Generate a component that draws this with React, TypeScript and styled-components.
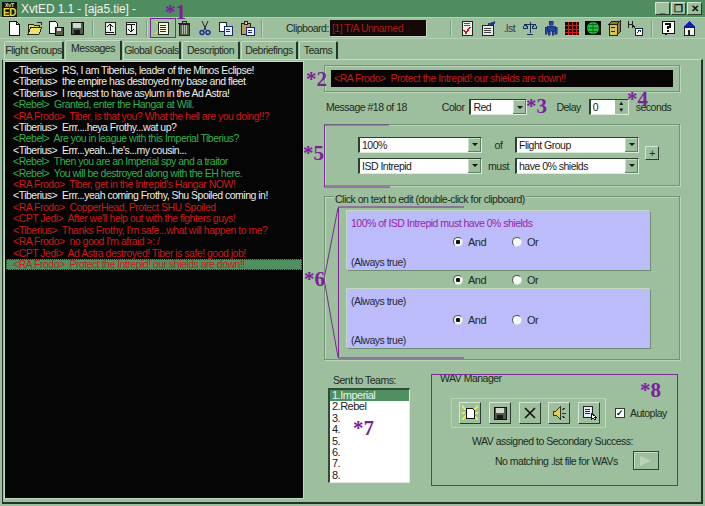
import React from "react";
import styled, { createGlobalStyle } from "styled-components";

const GlobalStyle = createGlobalStyle`
  html, body { margin: 0; padding: 0; background: #9dbf9d; }
  * { box-sizing: border-box; }
  body {
    font-family: "Liberation Sans", Arial, sans-serif;
    font-size: 10.5px;
    letter-spacing: -0.5px;
    color: #1c2a1e;
  }
`;

const MESSAGES: [string, string][] = [
  ["w", "<Tiberius>  RS, I am Tiberius, leader of the Minos Eclipse!"],
  ["w", "<Tiberius>  the empire has destroyed my base and fleet"],
  ["w", "<Tiberius>  I request to have asylum in the Ad Astra!"],
  ["g", "<Rebel>  Granted, enter the Hangar at Will."],
  ["r", "<RA Frodo>  Tiber, is that you? What the hell are you doing!!?"],
  ["w", "<Tiberius>  Errr....heya Frothy...wat up?"],
  ["g", "<Rebel>  Are you in league with this Imperial Tiberius?"],
  ["w", "<Tiberius>  Errr...yeah...he's...my cousin..."],
  ["g", "<Rebel>  Then you are an Imperial spy and a traitor"],
  ["g", "<Rebel>  You will be destroyed along with the EH here."],
  ["r", "<RA Frodo>  Tiber, get in the Intrepid's Hangar NOW!"],
  ["w", "<Tiberius>  Errr...yeah coming Frothy, Shu Spoiled coming in!"],
  ["r", "<RA Frodo>  CopperHead, Protect SHU Spoiled"],
  ["r", "<CPT Jedi>  After we'll help out with the fighters guys!"],
  ["r", "<Tiberius>  Thanks Frothy, I'm safe...what will happen to me?"],
  ["r", "<RA Frodo>  no good I'm afraid >: /"],
  ["r", "<CPT Jedi>  Ad Astra destroyed! Tiber is safe! good job!"],
  ["s", "<RA Frodo>  Protect the Intrepid! our shields are down!!"],
];

const TABS = [
  { label: "Flight Groups", w: 60 },
  { label: "Messages", w: 57, active: true },
  { label: "Global Goals", w: 58 },
  { label: "Description", w: 58 },
  { label: "Debriefings", w: 57 },
  { label: "Teams", w: 39 },
];

const COLORS: Record<string, string> = { w: "#eeeee6", g: "#35b04e", r: "#cc1a1a", s: "#c81e1e" };

const Ico = ({ children }: { children: React.ReactNode }) => (
  <svg width="16" height="16" viewBox="0 0 16 16" shapeRendering="crispEdges">{children}</svg>
);

const NewDoc = () => (
  <Ico><path d="M3 1h7l3 3v11H3z" fill="#fff" stroke="#111" /><path d="M10 1v3h3" fill="none" stroke="#111" /></Ico>
);
const BurstDoc = () => (
  <Ico>
    <path d="M0 1l4 4M16 1l-4 4M0 15l4-4M16 15l-4-4M0 8h3M13 8h3" stroke="#e8e85a" strokeWidth="2" />
    <path d="M4 3h6l2 2v8H4z" fill="#fff" stroke="#111" />
  </Ico>
);
const OpenDoc = () => (
  <Ico><path d="M1 4h5l1 1h5v2H4l-3 7z" fill="#e4d24a" stroke="#222" /><path d="M4 7h11l-3 7H1z" fill="#f1e36a" stroke="#222" /><path d="M10 2h4v3" fill="none" stroke="#222" /></Ico>
);
const SaveAs = () => (
  <Ico><path d="M1 1h6l2 2v10H1z" fill="#fff" stroke="#111" /><path d="M7 7h8v8H7z" fill="#5a5a48" stroke="#111" /><path d="M9 8h4v3H9z" fill="#ddd" /></Ico>
);
const Floppy = () => (
  <Ico><path d="M2 2h12v12H2z" fill="#4e5a4a" stroke="#111" /><path d="M4 3h8v5H4z" fill="#cfd8cc" /><path d="M5 10h6v4H5z" fill="#181818" /></Ico>
);
const MoveUp = () => (
  <Ico><path d="M3 2h10v12H3z" fill="#e8efe6" stroke="#222" /><path d="M8 4v7M5 7l3-3 3 3M4 12h8" fill="none" stroke="#111" /></Ico>
);
const MoveDown = () => (
  <Ico><path d="M3 2h10v12H3z" fill="#e8efe6" stroke="#222" /><path d="M8 5v7M5 9l3 3 3-3M4 4h8" fill="none" stroke="#111" /></Ico>
);
const Note = () => (
  <Ico>
    <path d="M0 1l3 3M15 1l-3 3M0 14l3-3M15 14l-3-3" stroke="#e8e85a" />
    <path d="M3 2h10v12H3z" fill="#f4f7d8" stroke="#222" /><path d="M5 5h6M5 7h6M5 9h6M5 11h6" stroke="#333" />
  </Ico>
);
const Trash = () => (
  <Ico><path d="M2 3h12M6 3V1h4v2" fill="none" stroke="#222" /><path d="M3 4h10v11H3z" fill="#57604f" stroke="#222" /><path d="M6 5v9M8 5v9M10 5v9" stroke="#b5bbae" /></Ico>
);
const Scissors = () => (
  <svg width="16" height="16" viewBox="0 0 16 16"><path d="M5 1l4 9M11 1L7 10" stroke="#222" fill="none" /><circle cx="5" cy="12.5" r="2" fill="none" stroke="#1a2a9a" strokeWidth="1.4" /><circle cx="11" cy="12.5" r="2" fill="none" stroke="#1a2a9a" strokeWidth="1.4" /></svg>
);
const Copy = () => (
  <Ico><path d="M1 2h7v9H1z" fill="#fff" stroke="#222" /><path d="M6 6h8v9H6z" fill="#e8f0ff" stroke="#1a2a7a" /><path d="M8 9h4M8 11h4" stroke="#1a2a7a" /></Ico>
);
const Paste = () => (
  <Ico><path d="M2 3h9v11H2z" fill="#b99d62" stroke="#222" /><path d="M5 1h3v3H5z" fill="#ccc" stroke="#222" /><path d="M7 7h8v8H7z" fill="#eef" stroke="#1a2a7a" /><path d="M9 10h4M9 12h4" stroke="#1a2a7a" /></Ico>
);
const Check = () => (
  <Ico><path d="M3 1h10v14H3z" fill="#eee" stroke="#222" /><path d="M5 3h6M5 5h6" stroke="#555" /><path d="M5 10l2 3 4-6" fill="none" stroke="#c01818" strokeWidth="1.6" /></Ico>
);
const Brief = () => (
  <Ico><path d="M2 5h11v10H2z" fill="#e8e8e8" stroke="#222" /><path d="M4 8h7M4 10h7M4 12h7" stroke="#444" /><path d="M7 4l8-3v3l-5 2z" fill="#1d3f8a" /></Ico>
);
const Scale = () => (
  <Ico><path d="M8 2v11M3 4h10M5 14h6" stroke="#16325c" fill="none" /><path d="M1 8h5M10 8h5M3 4L1 8M3 4l3 4M13 4l-3 4M13 4l2 4" stroke="#16325c" fill="none" /></Ico>
);
const Pilot = () => (
  <Ico><path d="M6 1h4v4H6zM4 6h8v5H4zM2 7h2v7H2zM12 7h2v7h-2zM5 11h2v4H5zM9 11h2v4H9z" fill="#24459c" stroke="#16255c" strokeWidth=".5" /></Ico>
);
const Grid = () => (
  <Ico><path d="M1 2h14v13H1z" fill="#0a0a0a" /><path d="M1 5h14M1 9h14M1 12h14M4 2v13M8 2v13M12 2v13" stroke="#d81a1a" /></Ico>
);
const Globe = () => (
  <svg width="16" height="16" viewBox="0 0 16 16"><path d="M0 1h16v14H0z" fill="#0a0a0a" /><circle cx="8" cy="8" r="6" fill="#22c23c" /><path d="M2 8h12M8 2v12M4 4.5h8M4 11.5h8" stroke="#0a6a1e" /></svg>
);
const Cabinet = () => (
  <Ico><path d="M3 4h8v11H3z" fill="#d8c24e" stroke="#222" /><path d="M11 4l3-3v11l-3 3zM3 4l3-3h8l-3 3z" fill="#8d7a24" stroke="#222" /><path d="M5 7h4M5 11h4" stroke="#222" /></Ico>
);
const Route = () => (
  <Ico><path d="M1 1v7M5 1v7M1 4h4M5 4l4 5" fill="none" stroke="#222" /><path d="M8 8h7v7H8z" fill="#fff" stroke="#222" /><path d="M10 13l3-3M11 10h2v2" fill="none" stroke="#1a2a7a" /></Ico>
);
const Help = () => (
  <Ico><path d="M2 1h12v12H8l-3 2v-2H2z" fill="#fff" stroke="#111" /><path d="M6 5V4h4v3H8v2M8 10v2" fill="none" stroke="#111" strokeWidth="1.4" /></Ico>
);
const Home = () => (
  <Ico><path d="M8 1l6 6H2z" fill="#1420b0" /><path d="M3 7h10v8H3z" fill="#f2f2f2" stroke="#222" /><path d="M7 10h2v5H7z" fill="#222" /></Ico>
);
const Cross = () => (
  <Ico><path d="M3 3l10 10M13 3L3 13" stroke="#111" strokeWidth="1.6" fill="none" shapeRendering="auto" /></Ico>
);
const Speaker = () => (
  <Ico><path d="M2 6h3l4-4v12l-4-4H2z" fill="#e0d050" stroke="#333" /><path d="M11 5l3-2M11 8h4M11 11l3 2" stroke="#333" /></Ico>
);
const ListPick = () => (
  <Ico><path d="M2 1h9v11H2z" fill="#e8ecf8" stroke="#222" /><path d="M4 4h5M4 6h5M4 8h5" stroke="#1a2a7a" /><path d="M10 8v7l2-2 2 2 1-1-2-2h2z" fill="#fff" stroke="#111" /></Ico>
);

const Window = styled.div`
  position: relative;
  width: 705px;
  height: 506px;
  overflow: hidden;
  background: #9dbf9d;
  display: flex;
  flex-direction: column;
`;

const TitleBar = styled.div`
  height: 17px;
  flex: none;
  background: #4f8d61;
  color: #eef4ee;
  display: flex;
  align-items: center;
  padding: 0 2px;
  gap: 4px;
  font-size: 12px;
  letter-spacing: -0.1px;
`;

const AppIcon = styled.div`
  width: 15px;
  height: 15px;
  margin-top: 2px;
  background: #14140c;
  color: #e8d838;
  font: bold 10px/9px "Liberation Sans", sans-serif;
  letter-spacing: -0.5px;
  display: flex;
  flex-direction: column;
  align-items: center;
  justify-content: flex-end;
  &::before {
    content: "XvT";
    font-size: 5px;
    line-height: 5px;
    letter-spacing: 0;
    color: #e8e8c8;
  }
`;

const Caption = styled.span`
  flex: 1;
`;

const WinButtons = styled.div`
  display: flex;
  gap: 1px;
  margin-right: 1px;
`;

const WinButton = styled.div`
  width: 15px;
  height: 13px;
  background: #9dbf9d;
  border: 1px solid;
  border-color: #d4e4d4 #2a3e2e #2a3e2e #d4e4d4;
  color: #111;
  font: bold 10px/11px "Liberation Sans", sans-serif;
  text-align: center;
`;

const Toolbar = styled.div`
  height: 22px;
  flex: none;
  display: flex;
  align-items: center;
  padding-left: 3px;
  border-top: 1px solid #b5d1b5;
  border-bottom: 1px solid #b5d1b5;
`;

const ToolButton = styled.div<{ $w?: number }>`
  width: ${(p) => p.$w ?? 21}px;
  height: 20px;
  flex: none;
  display: flex;
  align-items: center;
  justify-content: center;
`;

const ToolSep = styled.div<{ $l?: number; $r?: number }>`
  width: 1px;
  height: 17px;
  flex: none;
  background: #7c9f7f;
  box-shadow: 1px 0 0 #bdd6bd;
  margin: 0 ${(p) => p.$r ?? 6}px 0 ${(p) => p.$l ?? 6}px;
`;

const ClipLabel = styled.span`
  margin: 0 1px 0 24px;
`;

const ClipBox = styled.div`
  width: 96px;
  height: 16px;
  background: #140808;
  color: #b01818;
  line-height: 16px;
  padding-left: 2px;
  box-shadow: 1px 1px 0 #c4dac4;
`;

const ListText = styled.span`
  color: #2a3a46;
`;

const TabRow = styled.div`
  height: 20px;
  flex: none;
  padding: 1px 0 0 4px;
  display: flex;
  align-items: flex-end;
  gap: 1px;
`;

const Tab = styled.div<{ $w: number; $active?: boolean }>`
  position: relative;
  z-index: ${(p) => (p.$active ? 1 : 0)};
  width: ${(p) => p.$w}px;
  height: ${(p) => (p.$active ? 20 : 18)}px;
  text-align: center;
  white-space: nowrap;
  line-height: ${(p) => (p.$active ? 15 : 17)}px;
  background: #9dbf9d;
  border-top: 1px solid #c3dac3;
  border-left: 1px solid #c3dac3;
  border-right: 2px solid #23352a;
  border-radius: 2px 2px 0 0;
  margin-bottom: ${(p) => (p.$active ? -1 : 0)}px;
`;

const Body = styled.div`
  width: 701px;
  height: 445px;
  flex: none;
  margin-left: 2px;
  border-top: 1px solid #c3dac3;
  border-bottom: 2px solid #22332a;
  border-right: 2px solid #22332a;
  border-left: 1px solid #22332a;
  padding: 2px 0 0 2px;
  display: flex;
  gap: 7px;
`;

const MessageList = styled.div`
  width: 298px;
  height: 436px;
  flex: none;
  background: #050505;
  box-shadow: 0 0 0 1px #c0d8c0;
  padding: 3px 1px 0;
  line-height: 11.41px;
`;

const MsgLine = styled.div<{ $kind: string }>`
  color: ${(p) => COLORS[p.$kind]};
  white-space: pre;
  padding-left: 7px;
  height: 11.41px;
  background: ${(p) => (p.$kind === "s" ? "#4f8f60" : "transparent")};
  outline: ${(p) => (p.$kind === "s" ? "1px dotted #1c3524" : "none")};
  outline-offset: -1px;
`;

const Side = styled.div`
  width: 356px;
  margin-left: 14px;
  display: flex;
  flex-direction: column;
`;

const Group = styled.div<{ $h: number; $mt: number }>`
  position: relative;
  height: ${(p) => p.$h}px;
  margin-top: ${(p) => p.$mt}px;
  border: 1px solid #6f9575;
  box-shadow: 1px 1px 0 #bcd6bc, inset 1px 1px 0 #bcd6bc;
`;

const MessageField = styled(Group)`
  padding: 4px 6px;
`;

const BlackField = styled.div`
  height: 17px;
  background: #060404;
  color: #c01c1c;
  line-height: 16px;
  padding-left: 3px;
  white-space: pre;
`;

const OptionRow = styled.div`
  height: 16px;
  margin-top: 7px;
  display: flex;
  align-items: center;
  padding-left: 2px;
`;

const Label = styled.span<{ $ml?: number }>`
  margin-left: ${(p) => p.$ml ?? 0}px;
  white-space: nowrap;
`;

const Sunken = styled.div<{ $w?: number }>`
  ${(p) => (p.$w ? `width: ${p.$w}px;` : "")}
  height: 16px;
  background: #fff;
  border: 1px solid;
  border-color: #2b4031 #dcebdc #dcebdc #2b4031;
  border-width: 1px 1px 1px 2px;
  display: flex;
  align-items: center;
  justify-content: space-between;
  padding-left: 2px;
  color: #1a1a1a;
  text-align: left;
`;

const SpinArrows = styled.div`
  width: 13px;
  height: 14px;
  background: #9dbf9d;
  font-size: 6px;
  line-height: 7px;
  letter-spacing: 0;
  text-align: center;
  color: #111;
`;

const Arrow = styled.div`
  width: 13px;
  height: 14px;
  flex: none;
  background: #9dbf9d;
  box-shadow: inset -1px -1px 0 #5e7f64, inset 1px 1px 0 #c8dfc8;
  display: flex;
  align-items: center;
  justify-content: center;
  &::after {
    content: "";
    border: 3px solid transparent;
    border-top-color: #111;
    border-bottom: 0;
  }
`;

const Dropdown = ({ value, w }: { value: string; w?: number }) => (
  <Sunken $w={w}>
    {value}
    <Arrow />
  </Sunken>
);

const ConditionGroup = styled(Group)`
  display: flex;
  align-items: center;
  padding: 0 0 0 33px;
`;

const ConditionGrid = styled.div`
  display: grid;
  grid-template-columns: 124px 33px 124px;
  row-gap: 5px;
  align-items: center;
  text-align: center;
`;

const PlusButton = styled.div`
  width: 14px;
  height: 14px;
  margin: -4px 0 0 6px;
  background: #9dbf9d;
  border: 1px solid;
  border-color: #d4e4d4 #2c4032 #2c4032 #d4e4d4;
  line-height: 12px;
  text-align: center;
`;

const Legend = styled.span<{ $l: number; $t: number }>`
  position: absolute;
  top: ${(p) => p.$t}px;
  left: ${(p) => p.$l}px;
  padding: 0 1px;
  background: #9dbf9d;
  line-height: 13px;
  white-space: nowrap;
`;

const ClickGroup = styled(Group)`
  padding: 14px 0 0 22px;
`;

const Card = styled.div`
  width: 303px;
  height: 59px;
  background: #bcbcfa;
  box-shadow: 1px 1px 0 #6a8f72, -1px -1px 0 #c2d9c2;
  padding: 6px 4px 2px;
  display: flex;
  flex-direction: column;
  justify-content: space-between;
`;

const CardText = styled.div<{ $purple?: boolean }>`
  color: ${(p) => (p.$purple ? "#9a1fa8" : "#25283a")};
  line-height: 12px;
`;

const RadioRow = styled.div<{ $gap?: boolean }>`
  display: flex;
  height: 13px;
  align-items: center;
  padding-left: 106px;
  ${(p) => (p.$gap ? "margin: 3px 0;" : "")}
  ${Card} & {
    margin-left: -4px;
    margin-top: -2px;
  }
`;

const RadioItem = styled.label`
  display: flex;
  align-items: center;
  gap: 5px;
  width: 59px;
  font-size: 11px;
`;

const RadioDot = styled.span<{ $on?: boolean }>`
  width: 10px;
  height: 10px;
  border-radius: 50%;
  background: ${(p) => (p.$on ? "radial-gradient(circle, #111 0 2px, #f6f6f6 2.5px)" : "#f8f8f8")};
  border: 1px solid #4a5a50;
  border-right-color: #d0e0d0;
  border-bottom-color: #d0e0d0;
`;

const Radios = ({ gap }: { gap?: boolean }) => (
  <RadioRow $gap={gap}>
    <RadioItem><RadioDot $on />And</RadioItem>
    <RadioItem><RadioDot />Or</RadioItem>
  </RadioRow>
);

const BottomRow = styled.div`
  display: flex;
  margin-top: 14px;
`;

const TeamsCol = styled.div`
  width: 107px;
  flex: none;
  padding-left: 4px;
`;

const TeamsLabel = styled.div`
  margin-left: 5px;
  line-height: 13px;
  margin-bottom: 1px;
`;

const TeamsList = styled.div`
  width: 82px;
  height: 95px;
  background: #fff;
  border: 1px solid;
  border-width: 2px 1px 1px 2px;
  border-color: #2f4a36 #dcebdc #dcebdc #2f4a36;
  font-size: 11px;
  line-height: 11.4px;
`;

const TeamRow = styled.div<{ $on?: boolean }>`
  height: 11.4px;
  padding-left: 2px;
  background: ${(p) => (p.$on ? "#4f8f60" : "transparent")};
  color: ${(p) => (p.$on ? "#eef4ee" : "#222")};
`;

const WavGroup = styled.div`
  position: relative;
  width: 246px;
  height: 111px;
  padding-top: 24px;
`;

const WavTop = styled.div`
  display: flex;
  align-items: center;
`;

const WavToolbar = styled.div`
  width: 155px;
  height: 30px;
  margin-left: 20px;
  display: flex;
  align-items: center;
  justify-content: space-between;
  padding: 0 5px 0 7px;
  border: 1px solid #b7d3b7;
  border-right-color: #c8dfc8;
`;

const WavButton = styled.div`
  width: 22px;
  height: 22px;
  background: #9dbf9d;
  border: 1px solid;
  border-color: #d6e7d6 #2a3e2e #2a3e2e #d6e7d6;
  display: flex;
  align-items: center;
  justify-content: center;
`;

const CheckBox = styled.span`
  width: 10px;
  height: 10px;
  margin: 0 5px 0 9px;
  background: #fff;
  border: 1px solid #2a3e2e;
  color: #111;
  font: bold 9px/8px "Liberation Sans", sans-serif;
  text-align: center;
`;

const WavInfo = styled.div`
  margin-top: 7px;
  text-align: center;
  padding-right: 3px;
  line-height: 13px;
  white-space: nowrap;
`;

const WavBottom = styled.div`
  display: flex;
  align-items: center;
  margin-top: 3px;
  padding-left: 64px;
  white-space: nowrap;
`;

const PlayButton = styled.div`
  width: 26px;
  height: 19px;
  margin-left: 15px;
  border: 1px solid #2f4634;
  box-shadow: inset 1px 1px 0 #c8dfc8;
  display: flex;
  align-items: center;
  justify-content: center;
  &::after {
    content: "";
    border-style: solid;
    border-width: 5px 0 5px 11px;
    border-color: transparent transparent transparent #b9d2b9;
  }
`;

const Star = styled.span<{ $x: number; $y: number }>`
  position: absolute;
  left: ${(p) => p.$x}px;
  top: ${(p) => p.$y}px;
  font: bold 21px/21px "Liberation Serif", serif;
  letter-spacing: 0;
  color: #7b1f9c;
`;

const Overlay = styled.svg`
  position: absolute;
  left: 0;
  top: 0;
  pointer-events: none;
`;

const Annotations = () => (
  <>
    <Overlay width="705" height="506" fill="none" stroke="#7b2a96" shapeRendering="geometricPrecision">
      <rect x="150.5" y="18.5" width="25" height="19" />
      <path d="M389 125H324.5V187H390" />
      <path d="M464 207H338.5V358H464M338 208L324 279L338 357" />
      <rect x="431.5" y="374.5" width="246" height="111" />
    </Overlay>
    <Star $x={165} $y={2}>*1</Star>
    <Star $x={306} $y={69}>*2</Star>
    <Star $x={526} $y={96}>*3</Star>
    <Star $x={627} $y={89}>*4</Star>
    <Star $x={303} $y={143}>*5</Star>
    <Star $x={304} $y={269}>*6</Star>
    <Star $x={353} $y={418}>*7</Star>
    <Star $x={640} $y={380}>*8</Star>
  </>
);

export default function App() {
  return (
    <>
      <GlobalStyle />
      <Window>
        <TitleBar>
          <AppIcon>ED</AppIcon>
          <Caption>XvtED 1.1 - [aja5.tie] -</Caption>
          <WinButtons>
            <WinButton>_</WinButton>
            <WinButton>❐</WinButton>
            <WinButton>✕</WinButton>
          </WinButtons>
        </TitleBar>
        <Toolbar>
          <ToolButton><NewDoc /></ToolButton>
          <ToolButton><OpenDoc /></ToolButton>
          <ToolButton><SaveAs /></ToolButton>
          <ToolButton><Floppy /></ToolButton>
          <ToolSep $l={5} $r={6} />
          <ToolButton><MoveUp /></ToolButton>
          <ToolButton><MoveDown /></ToolButton>
          <ToolSep $l={5} $r={5} />
          <ToolButton><Note /></ToolButton>
          <ToolButton><Trash /></ToolButton>
          <ToolButton><Scissors /></ToolButton>
          <ToolButton><Copy /></ToolButton>
          <ToolButton><Paste /></ToolButton>
          <ToolSep $l={4} $r={0} />
          <ClipLabel>Clipboard:</ClipLabel>
          <ClipBox>[1] T/A Unnamed</ClipBox>
          <ToolSep $l={24} $r={6} />
          <ToolButton><Check /></ToolButton>
          <ToolButton><Brief /></ToolButton>
          <ToolButton><ListText>.lst</ListText></ToolButton>
          <ToolButton><Scale /></ToolButton>
          <ToolButton><Pilot /></ToolButton>
          <ToolButton><Grid /></ToolButton>
          <ToolButton><Globe /></ToolButton>
          <ToolButton><Cabinet /></ToolButton>
          <ToolButton><Route /></ToolButton>
          <ToolSep $l={5} $r={6} />
          <ToolButton><Help /></ToolButton>
          <ToolButton><Home /></ToolButton>
        </Toolbar>
        <TabRow>
          {TABS.map((t) => (
            <Tab key={t.label} $w={t.w} $active={t.active}>{t.label}</Tab>
          ))}
        </TabRow>
        <Body>
          <MessageList>
            {MESSAGES.map(([kind, text], i) => (
              <MsgLine key={i} $kind={kind}>{text}</MsgLine>
            ))}
          </MessageList>
          <Side>
            <MessageField $h={27} $mt={3}>
              <BlackField>{"<RA Frodo>  Protect the Intrepid! our shields are down!!"}</BlackField>
            </MessageField>
            <OptionRow>
              <Label>Message #18 of 18</Label>
              <Label $ml={35}>Color</Label>
              <Label $ml={5}><Dropdown value="Red" w={58} /></Label>
              <Label $ml={29}>Delay</Label>
              <Label $ml={8}>
                <Sunken $w={40}>0<SpinArrows>▲<br />▼</SpinArrows></Sunken>
              </Label>
              <Label $ml={7}>seconds</Label>
            </OptionRow>
            <ConditionGroup $h={62} $mt={9}>
              <ConditionGrid>
                <Dropdown value="100%" />
                <span>of</span>
                <Dropdown value="Flight Group" />
                <Dropdown value="ISD Intrepid" />
                <span>must</span>
                <Dropdown value="have 0% shields" />
              </ConditionGrid>
              <PlusButton>+</PlusButton>
            </ConditionGroup>
            <ClickGroup $h={164} $mt={10}>
              <Legend $l={9} $t={-4}>Click on text to edit (double-click for clipboard)</Legend>
              <Card>
                <CardText $purple>100% of ISD Intrepid must have 0% shields</CardText>
                <Radios />
                <CardText>(Always true)</CardText>
              </Card>
              <Radios gap />
              <Card>
                <CardText>(Always true)</CardText>
                <Radios />
                <CardText>(Always true)</CardText>
              </Card>
            </ClickGroup>
            <BottomRow>
              <TeamsCol>
                <TeamsLabel>Sent to Teams:</TeamsLabel>
                <TeamsList>
                  {["1.Imperial", "2.Rebel", "3.", "4.", "5.", "6.", "7.", "8."].map((t, i) => (
                    <TeamRow key={t} $on={i === 0}>{t}</TeamRow>
                  ))}
                </TeamsList>
              </TeamsCol>
              <WavGroup>
                <Legend $l={8} $t={-2}>WAV Manager</Legend>
                <WavTop>
                  <WavToolbar>
                    <WavButton><BurstDoc /></WavButton>
                    <WavButton><Floppy /></WavButton>
                    <WavButton><Cross /></WavButton>
                    <WavButton><Speaker /></WavButton>
                    <WavButton><ListPick /></WavButton>
                  </WavToolbar>
                  <CheckBox>✓</CheckBox>
                  <span>Autoplay</span>
                </WavTop>
                <WavInfo>WAV assigned to Secondary Success:</WavInfo>
                <WavBottom>
                  <span>No matching .lst file for WAVs</span>
                  <PlayButton />
                </WavBottom>
              </WavGroup>
            </BottomRow>
          </Side>
        </Body>
        <Annotations />
      </Window>
    </>
  );
}
